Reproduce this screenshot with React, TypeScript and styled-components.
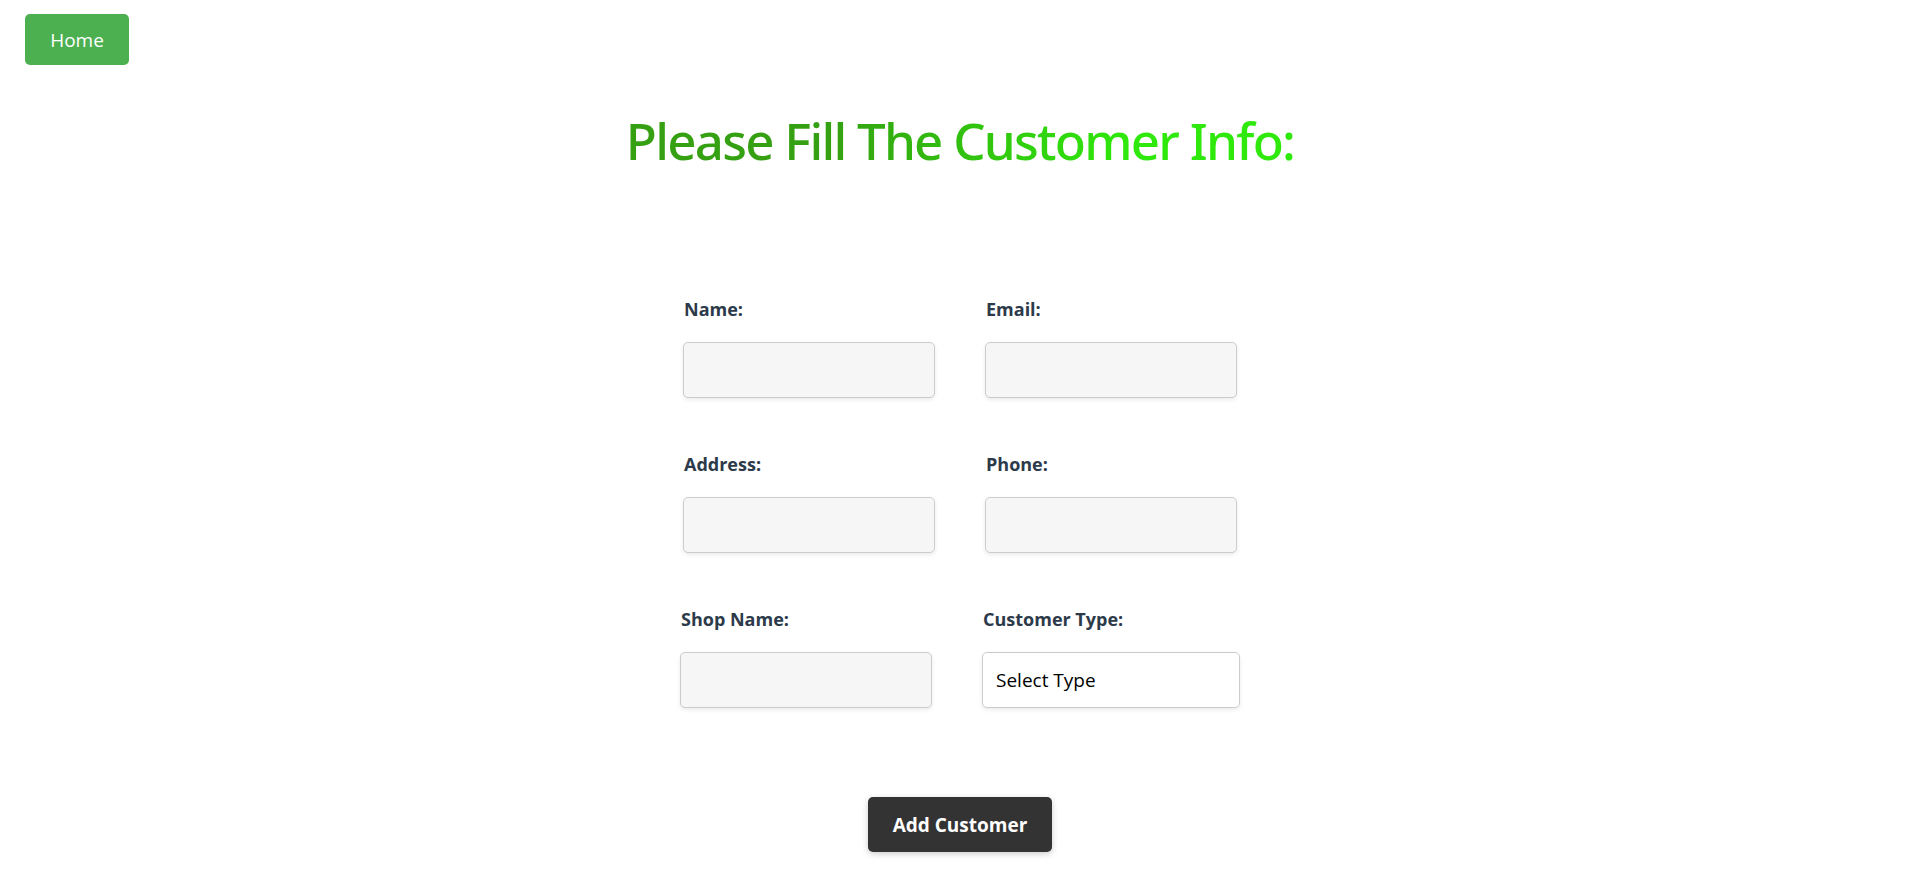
import styled, { createGlobalStyle } from "styled-components";

const GlobalStyle = createGlobalStyle`
    body {
        margin: 0;
        background: #ffffff;
        font-family: "Open Sans", "Noto Sans", sans-serif;
    }
`;

const fields = [
    [{ label: 'Name:', kind: 'input' }, { label: 'Email:', kind: 'input' }],
    [{ label: 'Address:', kind: 'input' }, { label: 'Phone:', kind: 'input' }],
    [{ label: 'Shop Name:', kind: 'input' }, { label: 'Customer Type:', kind: 'select' }],
];

const App = function() {
    return (
        <Page>
            <GlobalStyle />
            <HomeButton>Home</HomeButton>
            <Title>Please Fill The Customer Info:</Title>
            <Form onSubmit={(e) => e.preventDefault()}>
                {fields.map((row, i) => (
                    <Row key={i}>
                        {row.map((f) => (
                            <Field key={f.label}>
                                <Label>{f.label}</Label>
                                {f.kind === 'select' ? (
                                    <Select defaultValue="">
                                        <option value="" disabled>Select Type</option>
                                        <option value="retail">Retail</option>
                                        <option value="wholesale">Wholesale</option>
                                    </Select>
                                ) : (
                                    <Input type="text" />
                                )}
                            </Field>
                        ))}
                    </Row>
                ))}
                <SubmitButton type="submit">Add Customer</SubmitButton>
            </Form>
        </Page>
    )
}

export default App;

const Page = styled.div`
    padding: 14px 25px 40px;
`

const HomeButton = styled.button`
    display: block;
    width: 104px;
    height: 51px;
    background: #4caf50;
    color: #ffffff;
    border: none;
    border-radius: 5px;
    font-family: "Open Sans", sans-serif;
    font-size: 19px;
    cursor: pointer;
`

const Title = styled.h1`
    margin: 44px auto 0;
    width: fit-content;
    text-align: center;
    font-family: "Noto Sans", "Open Sans", sans-serif;
    font-size: 51px;
    line-height: 62px;
    font-weight: 500;
    letter-spacing: -1.75px;

    background: linear-gradient(to right, #34a012 30%, #2fe80c 75%);
    background-clip: text;
    -webkit-background-clip: text;
    color: transparent;
`

const Form = styled.form`
    display: flex;
    flex-direction: column;
    align-items: center;
    gap: 54px;
    margin-top: 126px;
`

const Row = styled.div`
    display: flex;
    gap: 50px;
`

const Field = styled.div`
    display: flex;
    flex-direction: column;
    gap: 21px;
`

const Label = styled.label`
    padding-left: 1px;
    font-size: 18px;
    line-height: 24px;
    font-weight: 700;
    color: #2c3a4a;
`

const Input = styled.input`
    box-sizing: border-box;
    width: 252px;
    height: 56px;
    background: #f6f6f6;
    border: 1px solid #cccccc;
    border-radius: 5px;
    box-shadow: 0 2px 4px rgba(0, 0, 0, 0.08);
    padding: 0 12px;
    font-size: 18px;
    font-family: "Open Sans", sans-serif;
`

const Select = styled.select`
    box-sizing: border-box;
    width: 258px;
    height: 56px;
    background: #ffffff;
    border: 1px solid #cccccc;
    border-radius: 5px;
    box-shadow: 0 2px 4px rgba(0, 0, 0, 0.08);
    padding: 0 13px;
    font-size: 19px;
    font-family: "Open Sans", sans-serif;
    color: #000000;
    appearance: none;
`

const SubmitButton = styled.button`
    margin-top: 35px;
    width: 184px;
    height: 55px;
    background: #333333;
    color: #ffffff;
    border: none;
    border-radius: 5px;
    box-shadow: 0 2px 6px rgba(0, 0, 0, 0.2);
    font-family: "Open Sans", sans-serif;
    font-size: 19px;
    font-weight: 700;
    cursor: pointer;
`
